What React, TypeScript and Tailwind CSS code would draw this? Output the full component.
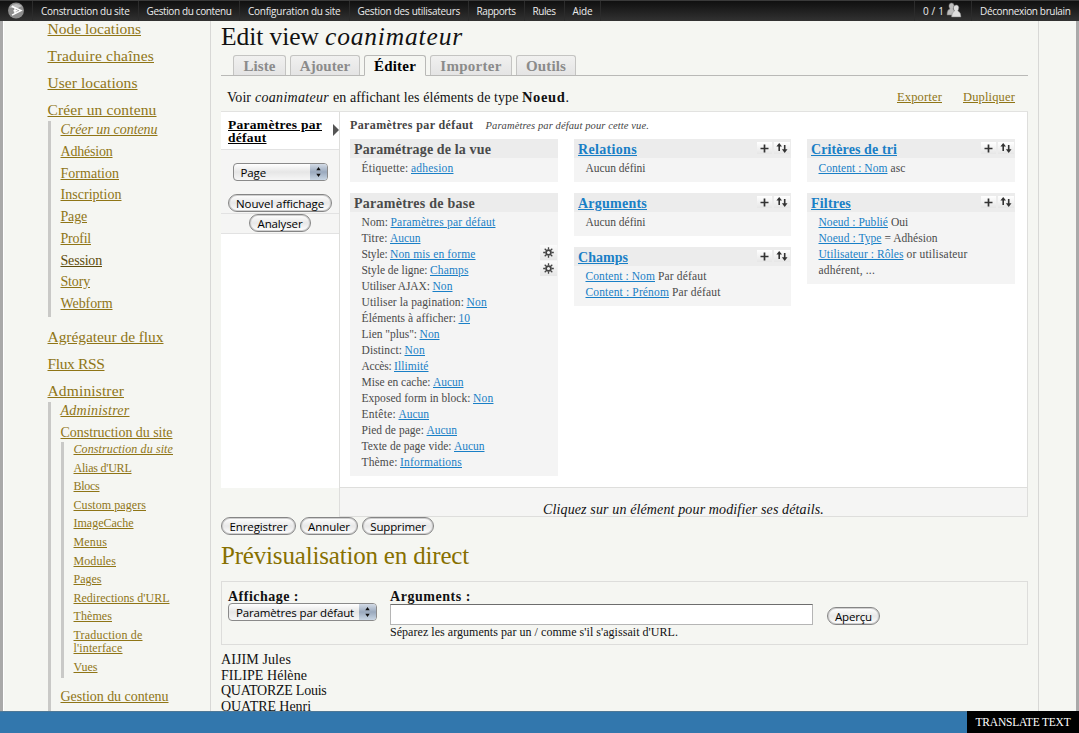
import { useLayoutEffect, useRef, useState } from "react";
import type { ReactNode } from "react";
import clsx from "clsx";

/* Text set to a given measure: the tracking is worked out from the natural width. */
function T({ w, className, children }: { w: number; className?: string; children: string }) {
  const ref = useRef<HTMLSpanElement>(null);
  const [spacing, setSpacing] = useState(0);
  useLayoutEffect(() => {
    const el = ref.current;
    if (!el) return;
    el.style.letterSpacing = "0px";
    setSpacing((w - el.getBoundingClientRect().width) / children.length);
  }, [w, children]);
  return (
    <span ref={ref} className={clsx("inline-block whitespace-nowrap", className)} style={{ letterSpacing: spacing + "px" }}>
      {children}
    </span>
  );
}

const SANS = "font-['Open_Sans',sans-serif]";
const GOLD = "text-[#8f7516] underline underline-offset-1";
const BLUE = "text-[#197fc6] underline underline-offset-[1px]";

function TopItem({ w, outer, children }: { w: number; outer: string; children: string }) {
  return (
    <div className={clsx("flex h-full items-center border-l border-[#2b2b2b] pl-2", outer)}>
      <T w={w}>{children}</T>
    </div>
  );
}

function TopBar() {
  return (
    <header
      className={clsx(
        "flex h-[21px] shrink-0 items-center border-t border-[#3a3a3a] bg-linear-to-b from-[#101010] to-[#323232] text-[10px] font-medium text-[#ececec]",
        SANS,
      )}
    >
      <div className="w-[32px] pl-2">
        <svg width="17" height="17" viewBox="0 0 17 17" className="-mt-[2px] block">
          <circle cx="8" cy="8.5" r="8" fill="#8d8d8d" />
          <path d="M1.500 5.500Q7 -.5 14 4L9 6.500Z" fill="#bdbdbd" />
          <path d="M3.800 4.200L13 8.600L4 13.200M5.500 8.700H9.500M7 6V11.500" fill="none" stroke="#fff" strokeWidth="1.5" />
        </svg>
      </div>
      <TopItem w={88.5} outer="w-[105.5px]">Construction du site</TopItem>
      <TopItem w={85} outer="w-[101.5px]">Gestion du contenu</TopItem>
      <TopItem w={92.5} outer="w-[109.5px]">Configuration du site</TopItem>
      <TopItem w={102.5} outer="w-[119px]">Gestion des utilisateurs</TopItem>
      <TopItem w={39} outer="w-[56px]">Rapports</TopItem>
      <TopItem w={23} outer="w-[40px]">Rules</TopItem>
      <TopItem w={20} outer="w-[37px] border-r">Aide</TopItem>
      <div className="ml-auto flex h-full items-center border-l border-[#2b2b2b] pl-2">
        <T w={21} className="mt-[1px]">0 / 1</T>
        <svg width="16" height="16" viewBox="0 0 16 16" className="-mt-[2px] ml-[2px] block">
          <g stroke="#777" strokeWidth=".5">
            <path d="M1 13Q1 7.5 4 7Q2.500 5 3 3Q3.500 1 5.500 1Q7.800 1 8 3.200Q8 5.500 7 7Q9 8 9 13Z" fill="#bdbdbd" />
            <path d="M5.500 15Q5.500 10 8.500 9Q7 7 7.500 5Q8.200 3 10.300 3Q12.500 3 12.800 5.300Q12.800 7.500 11.800 9Q15 10 15 15Z" fill="#dedede" />
          </g>
        </svg>
      </div>
      <TopItem w={90.5} outer="ml-[9px] w-[108px]">Déconnexion brulain</TopItem>
    </header>
  );
}

const CREATE: [string, number][] = [
  ["Adhésion", 52], ["Formation", 58.5], ["Inscription", 61], ["Page", 26.5], ["Profil", 30.5],
  ["Session", 41.5], ["Story", 29.5], ["Webform", 52],
];
const BUILD: [string, number][] = [
  ["Alias d'URL", 58], ["Blocs", 26], ["Custom pagers", 72.5], ["ImageCache", 60], ["Menus", 33.5],
  ["Modules", 42.5], ["Pages", 28], ["Redirections d'URL", 96], ["Thèmes", 38.5],
];

function Level1({ w, children }: { w: number; children: string }) {
  return (
    <div className="h-[27px] text-[15.5px] leading-[15px]">
      <T w={w} className={GOLD}>{children}</T>
    </div>
  );
}

function Sidebar() {
  return (
    <nav className="w-[207px] shrink-0 border-l border-white pl-[43.5px]">
      <Level1 w={93.500}>Node locations</Level1>
      <Level1 w={106.5}>Traduire chaînes</Level1>
      <Level1 w={90}>User locations</Level1>
      <Level1 w={109}>Créer un contenu</Level1>
      <ul className="-mt-2 mb-[12px] flex h-[196px] flex-col border-l-[3px] border-[#c9c9c7] pl-[10px] text-[14px] leading-[18px]">
        <li className="flex-1"><T w={97} className={clsx(GOLD, "italic")}>Créer un contenu</T></li>
        {CREATE.map(([label, w]) => (
          <li key={label} className="flex-1">
            <T w={w} className={clsx("underline underline-offset-1", label === "Session" ? "text-[#5e4c0c]" : "text-[#8f7516]")}>{label}</T>
          </li>
        ))}
      </ul>
      <Level1 w={116}>Agrégateur de flux</Level1>
      <Level1 w={57}>Flux RSS</Level1>
      <Level1 w={76.5}>Administrer</Level1>
      <div className="-mt-2 h-[320px] border-l-[3px] border-[#c9c9c7] pl-[10px] text-[14px] leading-[17px]">
        <div className="h-[21.5px]"><T w={69} className={clsx(GOLD, "italic")}>Administrer</T></div>
        <div className="h-[18.5px]"><T w={112} className={GOLD}>Construction du site</T></div>
        <ul className="mb-[10px] h-[236px] border-l-[3px] border-[#c9c9c7] pt-px pl-[10px] text-[12px] leading-[13px]">
          <li className="h-[18.6px]"><T w={99.5} className={clsx(GOLD, "italic")}>Construction du site</T></li>
          {BUILD.map(([label, w]) => (
            <li key={label} className="h-[18.6px]"><T w={w} className={GOLD}>{label}</T></li>
          ))}
          <li className="flex h-[31.6px] flex-col items-start">
            <T w={69} className={GOLD}>Traduction de</T>
            <T w={49} className={GOLD}>l'interface</T>
          </li>
          <li><T w={24} className={GOLD}>Vues</T></li>
        </ul>
        <T w={108} className={GOLD}>Gestion du contenu</T>
      </div>
    </nav>
  );
}

function Tab({ w, outer, active, children }: { w: number; outer: string; active?: boolean; children: string }) {
  return (
    <div
      className={clsx(
        "flex items-center justify-center rounded-t-[3px] border text-[15px] leading-none font-bold",
        active ? "-mb-px h-[21px] border-[#b9b9b7] border-b-[#f5f6f2] bg-[#f5f6f2] pt-[2px] text-black" : "h-[20px] border-b-0 border-[#c4c4c2] bg-linear-to-b from-[#f1f1f0] to-[#e4e4e4] pt-[2px] text-[#8b8b8b]",
        outer,
      )}
    >
      <T w={w}>{children}</T>
    </div>
  );
}

function AquaButton({ w, outer, children }: { w: number; outer: string; children: string }) {
  return (
    <button
      className={clsx(
        "flex h-[18px] items-center justify-center rounded-full border border-[#858585] bg-linear-to-b from-white via-[#e8e8e8] to-white pt-px text-[11.5px] leading-none text-black inset-ring inset-ring-[#cfcfcf]",
        SANS, outer,
      )}
    >
      <T w={w}>{children}</T>
    </button>
  );
}

function AquaSelect({ w, outer, children }: { w: number; outer: string; children: string }) {
  return (
    <div
      className={clsx(
        "flex h-[18px] items-center justify-between overflow-hidden rounded-[4px] border border-[#8a8a8a] bg-linear-to-b from-white via-[#e6e6e6] to-[#f6f6f6] pl-[7px] text-[11.5px] leading-none text-black",
        SANS, outer,
      )}
    >
      <T w={w} className="pt-[2px]">{children}</T>
      <span className="flex h-full w-[17px] items-center justify-center bg-linear-to-b from-[#d3dbe6] via-[#9aa9bd] to-[#c9d6e4]">
        <svg width="7" height="12" viewBox="0 0 7 12"><path d="M3.500 1L5.700 4.200H1.300ZM3.500 11L5.700 7.800H1.300Z" fill="#111" /></svg>
      </span>
    </div>
  );
}

function IconPair() {
  return (
    <div className="flex h-[13px] gap-[2px] pt-px">
      <span className="flex w-[15px] items-center justify-center bg-linear-to-b from-white to-[#e6e6e6]">
        <svg width="9" height="9" viewBox="0 0 9 9"><path d="M4.500 .5V8.500M.5 4.500H8.500" stroke="#333" strokeWidth="1.700" /></svg>
      </span>
      <span className="flex w-[16px] items-center justify-center bg-linear-to-b from-white to-[#e6e6e6]">
        <svg width="12" height="10" viewBox="0 0 12 10">
          <path d="M3.200 8V2M8.700 2V8" stroke="#333" strokeWidth="1.600" />
          <path d="M3.200 0L6 3.600H.4ZM8.700 10L11.500 6.200H5.900Z" fill="#333" />
        </svg>
      </span>
    </div>
  );
}

function Gear() {
  return (
    <span className="flex h-[15px] w-[17px] items-center justify-center bg-linear-to-b from-[#fbfbfb] to-[#e6e6e6] pr-px">
      <svg width="11" height="11" viewBox="0 0 11 11">
        <circle cx="5.500" cy="5.500" r="2.400" fill="none" stroke="#444" strokeWidth="1.700" />
        <path d="M5.500 .2V2.500M5.500 8.500V10.800M.2 5.500H2.500M8.500 5.500H10.800M1.700 1.700L3.400 3.400M7.600 7.600L9.300 9.300M9.300 1.700L7.600 3.400M1.700 9.300L3.400 7.600" stroke="#444" strokeWidth="1.300" />
      </svg>
    </span>
  );
}

function Bucket({ title, w, link, children }: { title: string; w: number; link?: boolean; children: ReactNode }) {
  return (
    <section className="bg-[#f4f4f4] pb-[6px] text-[#4a4a4a]">
      <div className="mb-[2px] flex h-[19px] justify-between bg-[#ececec] pr-px pl-1">
        <T w={w} className={clsx("text-[14px] leading-[22px] font-bold", link ? BLUE : "text-[#4a4a4a]")}>{title}</T>
        {link && <span className="pt-[2px]"><IconPair /></span>}
      </div>
      <div className="pr-px pl-[11.5px] text-[11.5px] leading-4">{children}</div>
    </section>
  );
}

/* x is where the value starts, counted from the start of the label. */
function Setting({ label, x, value, w, gear }: { label: string; x: number; value: string; w: number; gear?: boolean }) {
  return (
    <div className="flex h-4">
      <T w={x - 2.5}>{label}</T>
      <T w={w} className={clsx(BLUE, "ml-[2.5px]")}>{value}</T>
      {gear && <span className="ml-auto -mt-px"><Gear /></span>}
    </div>
  );
}

function LinkRow({ link, w, rest, rw }: { link: string; w: number; rest: string; rw: number }) {
  return (
    <div className="flex h-4 gap-[3px]">
      <T w={w} className={BLUE}>{link}</T>
      <T w={rw}>{rest}</T>
    </div>
  );
}

const SETTINGS: [string, number, string, number, boolean?][] = [
  ["Nom:", 29, "Paramètres par défaut", 105],
  ["Titre:", 28.5, "Aucun", 30.5],
  ["Style:", 28.5, "Non mis en forme", 85.5, true],
  ["Style de ligne:", 68.5, "Champs", 38.5, true],
  ["Utiliser AJAX:", 71, "Non", 20],
  ["Utiliser la pagination:", 105, "Non", 20.5],
  ["Éléments à afficher:", 97, "10", 11.5],
  ["Lien \"plus\":", 58, "Non", 20],
  ["Distinct:", 43, "Non", 20.5],
  ["Accès:", 32.5, "Illimité", 34.5],
  ["Mise en cache:", 71.5, "Aucun", 30.5],
  ["Exposed form in block:", 111.5, "Non", 20.5],
  ["Entête:", 37, "Aucun", 30.5],
  ["Pied de page:", 65, "Aucun", 30.5],
  ["Texte de page vide:", 92.5, "Aucun", 30.5],
  ["Thème:", 38.5, "Informations", 62],
];

function ViewPanel() {
  return (
    <div className="flex h-[406px] shrink-0 border-t border-[#e2e2e0]">
      <div className="h-[376px] w-[118px] shrink-0 bg-white">
        <div className="flex h-[37px] items-start justify-between pt-[6px] pl-[7px] text-[13.5px] leading-[13px] font-bold text-black">
          <div className="flex flex-col items-start">
            <T w={94} className="underline underline-offset-[1px]">Paramètres par</T>
            <T w={38.5} className="underline underline-offset-[1px]">défaut</T>
          </div>
          <svg width="6" height="12" viewBox="0 0 6 12" className="mt-[6px]"><path d="M0 0L6 6L0 12Z" fill="#555" /></svg>
        </div>
        <div className="flex h-[65px] flex-col items-center justify-between border-y border-[#e2e2e2] bg-[#f5f5f4] pt-[13px]">
          <AquaSelect w={25.5} outer="w-[95px]">Page</AquaSelect>
          <AquaButton w={88} outer="mb-px w-[104px]">Nouvel affichage</AquaButton>
        </div>
        <div className="flex h-[20px] justify-center border-b border-[#e2e2e2] bg-[#f5f5f4]">
          <AquaButton w={45} outer="w-[62px]">Analyser</AquaButton>
        </div>
      </div>
      <div className="flex w-[689px] flex-col border-x border-b border-[#dededc] bg-white">
        <div className="flex h-[375px] shrink-0 flex-col pr-3 pl-[10px]">
          <div className="flex h-[27px] gap-3 text-[#444]">
            <T w={123.5} className="text-[12px] leading-[27px] font-bold">Paramètres par défaut</T>
            <T w={163.5} className="text-[10.500px] leading-[28px] italic">Paramètres par défaut pour cette vue.</T>
          </div>
          <div className="flex gap-4">
            <div className="flex w-[208px] flex-col gap-[11px]">
              <Bucket title="Paramétrage de la vue" w={137}>
                <Setting label="Étiquette:" x={49.5} value="adhesion" w={42.5} />
              </Bucket>
              <Bucket title="Paramètres de base" w={121}>
                {SETTINGS.map(([label, x, value, w, gear]) => (
                  <Setting key={label} label={label} x={x} value={value} w={w} gear={gear} />
                ))}
              </Bucket>
            </div>
            <div className="flex w-[217px] flex-col gap-[11px]">
              <Bucket title="Relations" w={59} link><T w={60}>Aucun défini</T></Bucket>
              <Bucket title="Arguments" w={69} link><T w={60}>Aucun défini</T></Bucket>
              <Bucket title="Champs" w={50} link>
                <LinkRow link="Content : Nom" w={69.5} rest="Par défaut" rw={48.500} />
                <LinkRow link="Content : Prénom" w={83.500} rest="Par défaut" rw={48.500} />
              </Bucket>
            </div>
            <div className="flex w-[208px] flex-col gap-[11px]">
              <Bucket title="Critères de tri" w={86} link>
                <LinkRow link="Content : Nom" w={69} rest="asc" rw={15} />
              </Bucket>
              <Bucket title="Filtres" w={40} link>
                <LinkRow link="Noeud : Publié" w={69.5} rest="Oui" rw={17} />
                <LinkRow link="Noeud : Type" w={63} rest="= Adhésion" rw={53} />
                <LinkRow link="Utilisateur : Rôles" w={85} rest="or utilisateur" rw={61} />
                <T w={56.5}>adhérent, ...</T>
              </Bucket>
            </div>
          </div>
        </div>
        <div className="flex h-[29px] shrink-0 justify-center border-t border-[#dededc] bg-[#f5f5f4] pt-[14px] text-[14px] leading-[14px] text-[#111] italic">
          <T w={281} className="-mb-1 pt-px">Cliquez sur un élément pour modifier ses détails.</T>
        </div>
      </div>
    </div>
  );
}

function Preview() {
  return (
    <>
      <h2 className="h-[46px] shrink-0 text-[25px] leading-[42px] text-[#877000]"><T w={248}>Prévisualisation en direct</T></h2>
      <div className="flex h-[64px] shrink-0 border border-[#dddddb] pt-[8px] pl-[6px] text-[14px] leading-[14px] text-[#111]">
        <div className="w-[162px]">
          <div className="h-[14px]"><T w={71} className="font-bold">Affichage :</T></div>
          <AquaSelect w={118} outer="-mt-px w-[149px]">Paramètres par défaut</AquaSelect>
        </div>
        <div className="flex w-[437px] flex-col items-start">
          <T w={81} className="h-[14px] font-bold">Arguments :</T>
          <input className="h-[21px] w-[423px] border border-[#b5b5b5] border-t-[#6d6d6d] bg-white" />
          <T w={288} className="text-[12px]">Séparez les arguments par un / comme s'il s'agissait d'URL.</T>
        </div>
        <div className="pt-[17px]"><AquaButton w={37} outer="w-[53px]">Aperçu</AquaButton></div>
      </div>
      <div className="flex shrink-0 flex-col items-start pt-[7px] text-[14px] leading-[15.7px] text-[#111]">
        <T w={70}>AIJIM Jules</T>
        <T w={86}>FILIPE Hélène</T>
        <T w={105.5}>QUATORZE Louis</T>
        <T w={90}>QUATRE Henri</T>
      </div>
    </>
  );
}

export default function App() {
  return (
    <div className="flex h-[733px] w-[1079px] flex-col overflow-hidden bg-[#f5f6f2] font-['Liberation_Serif',serif]">
      <TopBar />
      <div className="flex min-h-0 flex-1 overflow-hidden border-x-[3px] border-[#a9a9a9]">
        <Sidebar />
        <main className="flex w-[829px] shrink-0 flex-col border-x border-[#d8d8d6] pr-[10px] pl-[10px]">
          <h1 className="flex h-[34px] shrink-0 gap-[6px] text-[25.5px] leading-[32px] text-[#111]">
            <T w={98}>Edit view</T>
            <T w={138} className="italic">coanimateur</T>
          </h1>
          <div className="flex h-[21px] shrink-0 items-end gap-1 border-b border-[#b9b9b7] pl-3">
            <Tab w={32} outer="w-[53px]">Liste</Tab>
            <Tab w={50.5} outer="w-[70px]">Ajouter</Tab>
            <Tab w={42} outer="w-[62px]" active>Éditer</Tab>
            <Tab w={61.5} outer="w-[82px]">Importer</Tab>
            <Tab w={40} outer="w-[60px]">Outils</Tab>
          </div>
          <div className="flex h-[35px] shrink-0 items-start pt-[13px] pr-[13px] pl-[6px] text-[14px] leading-[17px] text-[#111]">
            <T w={24}>Voir</T>
            <T w={74} className="ml-1 italic">coanimateur</T>
            <T w={185.5} className="ml-[4px]">en affichant les éléments de type</T>
            <T w={43.5} className="ml-[3.5px] text-[14.500px] font-bold">Noeud</T>
            <span>.</span>
            <T w={45} className={clsx(GOLD, "ml-auto text-[12.500px]")}>Exporter</T>
            <T w={52} className={clsx(GOLD, "ml-[21px] text-[12.500px]")}>Dupliquer</T>
          </div>
          <ViewPanel />
          <div className="flex h-[18px] shrink-0 gap-1">
            <AquaButton w={58} outer="w-[75px]">Enregistrer</AquaButton>
            <AquaButton w={42} outer="w-[58px]">Annuler</AquaButton>
            <AquaButton w={55.5} outer="w-[72px]">Supprimer</AquaButton>
          </div>
          <Preview />
        </main>
      </div>
      <footer className="flex h-[22px] shrink-0 justify-end border-t border-[#4f7896] bg-[#3277ad]">
        <div className="-mt-px flex w-[112px] items-center justify-center bg-black pt-[2px] text-[11.500px] text-white">
          <T w={95}>TRANSLATE TEXT</T>
        </div>
      </footer>
    </div>
  );
}
